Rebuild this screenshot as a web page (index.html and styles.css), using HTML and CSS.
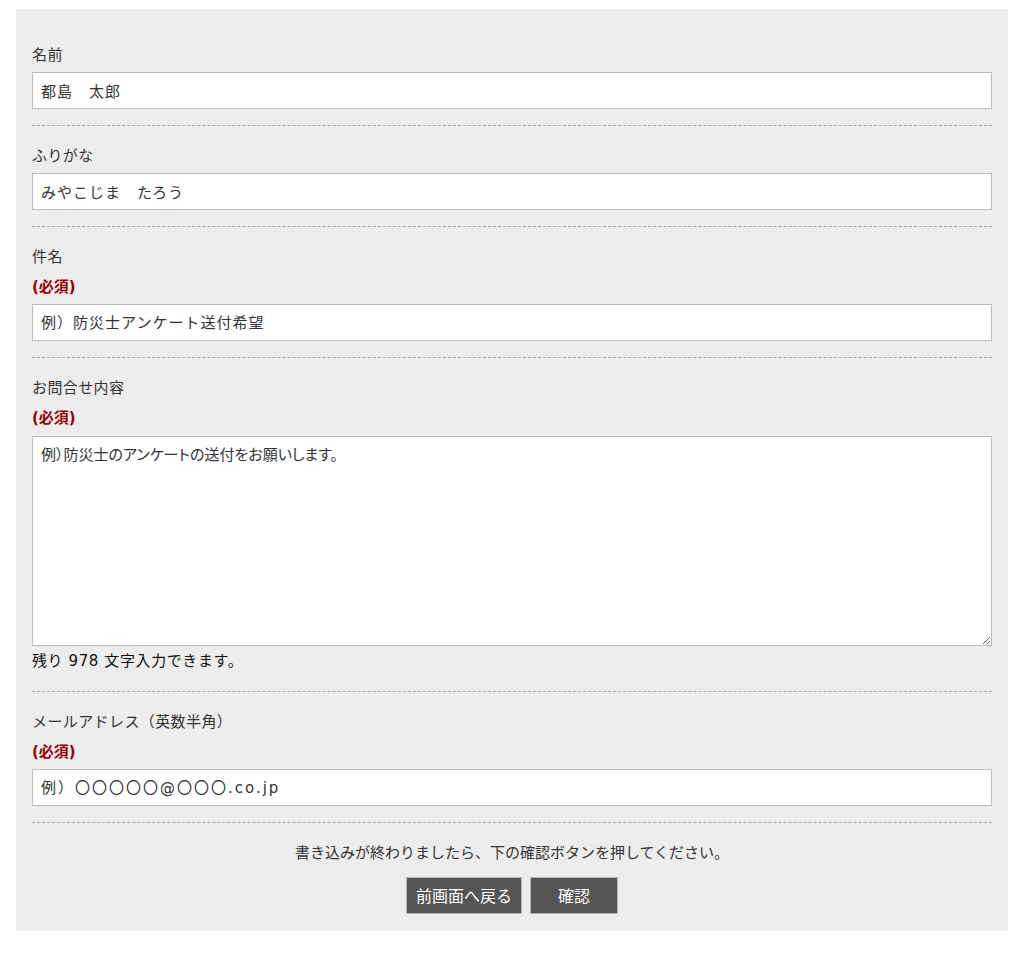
FILE: index.html
```html
<!DOCTYPE html>
<html lang="ja">
<head>
<meta charset="utf-8">
<title>お問合せフォーム</title>
<link rel="stylesheet" href="styles.css">
</head>
<body>
<div class="page">
  <form class="panel">
    <div class="field">
      <div class="label">名前</div>
      <input class="text" type="text" value="都島　太郎">
    </div>
    <div class="field">
      <div class="label">ふりがな</div>
      <input class="text" type="text" value="みやこじま　たろう">
    </div>
    <div class="field">
      <div class="label">件名</div>
      <div class="required">(必須)</div>
      <input class="text" type="text" placeholder="例）防災士アンケート送付希望">
    </div>
    <div class="field field-area">
      <div class="label">お問合せ内容</div>
      <div class="required">(必須)</div>
      <textarea class="area" placeholder="例）防災士のアンケートの送付をお願いします。"></textarea>
      <div class="counter">残り 978 文字入力できます。</div>
    </div>
    <div class="field">
      <div class="label">メールアドレス（英数半角）</div>
      <div class="required">(必須)</div>
      <input class="text text-mail" type="text" placeholder="例）〇〇〇〇〇@〇〇〇.co.jp">
    </div>
    <div class="footer">
      <p class="note">書き込みが終わりましたら、下の確認ボタンを押してください。</p>
      <div class="buttons">
        <button type="button" class="btn">前画面へ戻る</button>
        <button type="button" class="btn btn-confirm">確認</button>
      </div>
    </div>
  </form>
</div>
</body>
</html>
```

FILE: styles.css
```css
html, body {
  margin: 0;
  padding: 0;
  background: #ffffff;
}
body {
  font-family: "DejaVu Sans", "Noto Sans CJK JP", sans-serif;
  color: #333333;
  font-size: 15px;
}
.page {
  padding: 9px 19px 24px 16px;
}
.panel {
  width: 992px;
  box-sizing: border-box;
  background: #ededed;
  padding: 16px 16px 17px;
  margin: 0;
}
.field {
  padding: 18px 0 16px;
  border-bottom: 1px dashed #a8a8a8;
}
.label {
  font-size: 15px;
  line-height: 24px;
  letter-spacing: 0.4px;
  color: #333333;
}
.required {
  margin-top: 6px;
  font-size: 15px;
  line-height: 24px;
  font-weight: bold;
  color: #9b0000;
}
.text {
  display: block;
  box-sizing: border-box;
  width: 960px;
  height: 37px;
  margin-top: 5px;
  padding: 0 8px;
  border: 1px solid #bdbdbd;
  border-radius: 0;
  background: #ffffff;
  font-family: "DejaVu Sans", "Noto Sans CJK JP", sans-serif;
  font-size: 15px;
  letter-spacing: 1px;
  color: #333333;
  outline: none;
}
.text-mail {
  letter-spacing: 2px;
}
.text::placeholder,
.area::placeholder {
  color: #333333;
  opacity: 1;
}
.area {
  display: block;
  box-sizing: border-box;
  width: 960px;
  height: 210px;
  margin-top: 6px;
  padding: 7px 8px;
  border: 1px solid #bdbdbd;
  border-radius: 0;
  background: #ffffff;
  font-family: "Noto Sans CJK JP", "Noto Sans", sans-serif;
  font-size: 15px;
  line-height: 20px;
  font-feature-settings: "palt";
  color: #333333;
  outline: none;
  resize: vertical;
}
.counter {
  margin-top: 3px;
  margin-bottom: 2px;
  font-size: 15px;
  line-height: 24px;
  letter-spacing: 0.6px;
  color: #111111;
}
.footer {
  padding-top: 18px;
  text-align: center;
}
.note {
  margin: 0;
  font-size: 15px;
  line-height: 24px;
  color: #333333;
}
.buttons {
  margin-top: 12px;
  display: flex;
  justify-content: center;
  gap: 8px;
}
.btn {
  box-sizing: border-box;
  height: 37px;
  padding: 0 9px;
  background: #555555;
  border: 1px solid #b5b5b5;
  border-radius: 0;
  color: #ffffff;
  font-family: "Noto Sans CJK JP", "Noto Sans", sans-serif;
  font-size: 16px;
  line-height: 35px;
  cursor: pointer;
}
.btn-confirm {
  width: 88px;
}
```
